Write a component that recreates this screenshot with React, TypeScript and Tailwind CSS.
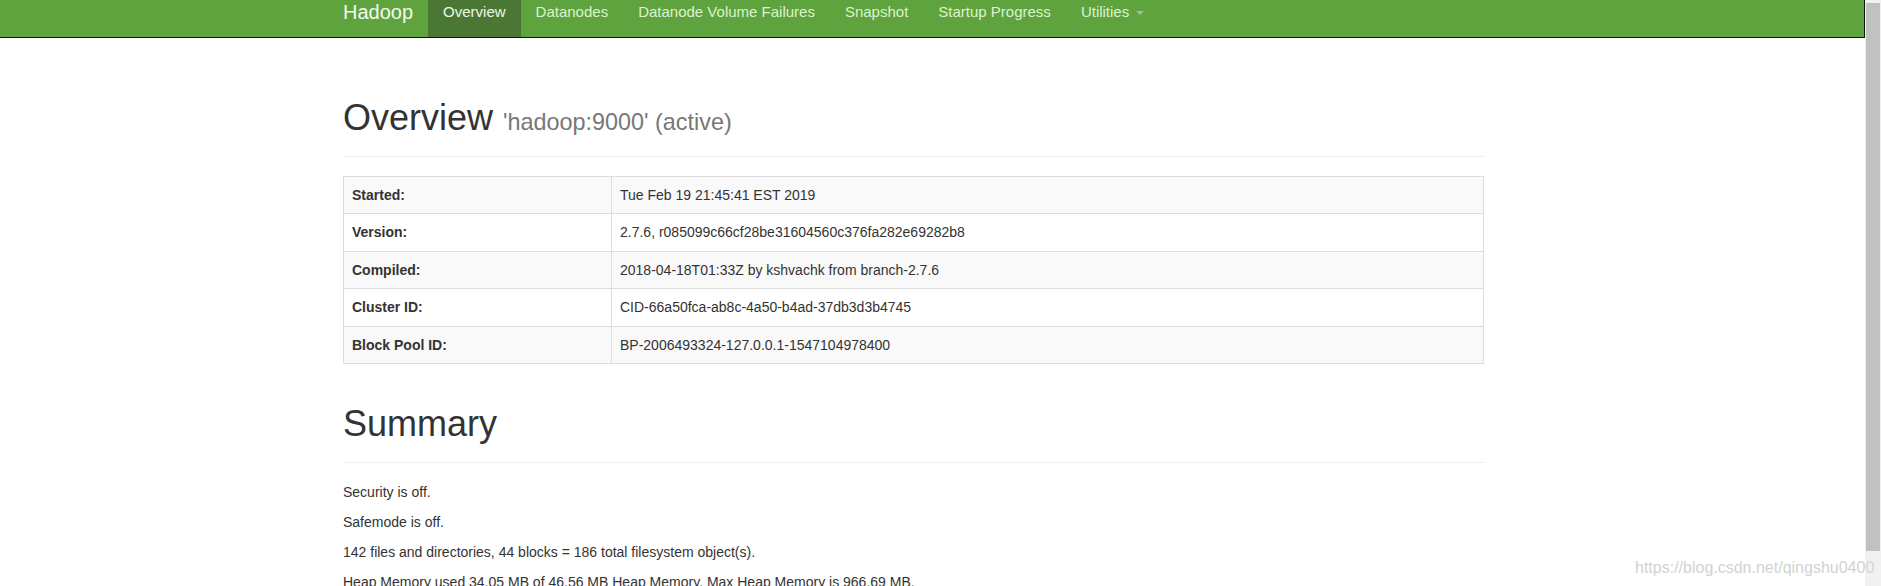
const navItems = [
  "Overview",
  "Datanodes",
  "Datanode Volume Failures",
  "Snapshot",
  "Startup Progress",
];

const overviewRows = [
  ["Started:", "Tue Feb 19 21:45:41 EST 2019"],
  ["Version:", "2.7.6, r085099c66cf28be31604560c376fa282e69282b8"],
  ["Compiled:", "2018-04-18T01:33Z by kshvachk from branch-2.7.6"],
  ["Cluster ID:", "CID-66a50fca-ab8c-4a50-b4ad-37db3d3b4745"],
  ["Block Pool ID:", "BP-2006493324-127.0.0.1-1547104978400"],
];

const summary = [
  "Security is off.",
  "Safemode is off.",
  "142 files and directories, 44 blocks = 186 total filesystem object(s).",
  "Heap Memory used 34.05 MB of 46.56 MB Heap Memory. Max Heap Memory is 966.69 MB.",
];

function NavBar() {
  return (
    <nav className="flex h-[38px] border-b border-r border-[#0b1a05] bg-[#5fa33e]">
      <div className="ml-[343px] flex">
        <span className="mr-[15px] pt-[2px] text-[20px] leading-[20px] text-[#f4f8f0]">
          Hadoop
        </span>
        {navItems.map((item, i) => (
          <span
            key={item}
            className={`h-[37px] px-[15px] pt-[2px] text-[15px] leading-[20px] ${
              i === 0 ? "bg-[#4b7735] text-[#eef7e8]" : "text-[#dcf2cf]"
            }`}
          >
            {item}
          </span>
        ))}
        <span className="flex h-[37px] items-start px-[15px] pt-[2px] text-[15px] leading-[20px] text-[#dcf2cf]">
          Utilities
          <span className="ml-[7px] mt-[9px] h-0 w-0 border-x-[4px] border-t-[4px] border-x-transparent border-t-[#a9b9a0]" />
        </span>
      </div>
    </nav>
  );
}

function PageHeader({ title, small }: { title: string; small?: string }) {
  return (
    <div className="border-b border-[#eee] pb-[18px]">
      <h1 className="text-[36px] font-normal leading-[39.6px] text-[#333]">
        {title}{" "}
        {small && (
          <span className="text-[23.4px] leading-none text-[#777]">{small}</span>
        )}
      </h1>
    </div>
  );
}

export default function App() {
  return (
    <div className="relative flex h-[586px] w-[1881px] overflow-hidden bg-white font-['Liberation_Sans',Arial,sans-serif] text-[14px] leading-[20px] text-[#333]">
      <div className="w-[1865px] shrink-0">
        <NavBar />

        <div className="ml-[343px] w-[1141px] pt-[60px]">
          {/* Overview */}
          <PageHeader title="Overview" small="'hadoop:9000' (active)" />
          <table className="mt-[19px] w-full border-collapse border border-[#ddd]">
            <tbody>
              {overviewRows.map(([label, value], i) => (
                <tr key={label} className={i % 2 === 0 ? "bg-[#f9f9f9]" : ""}>
                  <th className="w-[268px] border border-[#ddd] px-[8px] py-[8.25px] text-left font-bold leading-[20px]">
                    {label}
                  </th>
                  <td className="border border-[#ddd] px-[8px] py-[8.25px] leading-[20px]">
                    {value}
                  </td>
                </tr>
              ))}
            </tbody>
          </table>

          {/* Summary */}
          <div className="mt-[40px]">
            <PageHeader title="Summary" />
          </div>
          <div className="mt-[19px]">
            {summary.map((line) => (
              <p key={line} className="mb-[10px]">
                {line}
              </p>
            ))}
          </div>
        </div>
      </div>

      {/* scrollbar */}
      <div className="flex-1 bg-[#f1f1f1]">
        <div className="ml-[1px] mr-[1px] mt-[3px] h-[548px] bg-[#c1c1c1]" />
      </div>

      <span className="absolute left-[1635px] top-[559px] text-[16px] leading-[18px] text-[#d2d2d2] [text-shadow:0_0_1px_#fff]">
        https://blog.csdn.net/qingshu0400
      </span>
    </div>
  );
}
